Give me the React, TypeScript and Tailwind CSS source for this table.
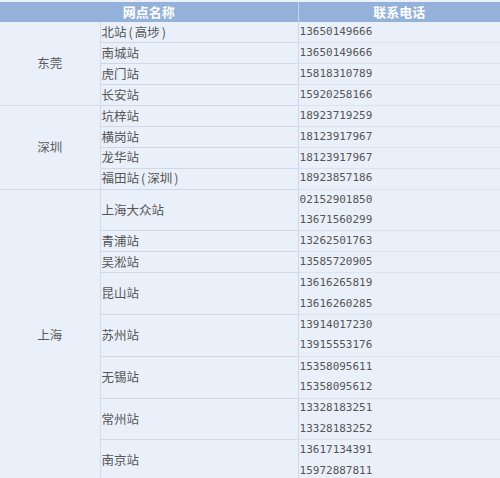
import React from "react";

type Station = { name: React.ReactNode; phones: string[] };
type Group = { city: string; stations: Station[] };

const P = ({ children }: { children: React.ReactNode }) => (
  <span className="mx-[2px]">{children}</span>
);

const groups: Group[] = [
  {
    city: "东莞",
    stations: [
      { name: <>北站<P>(</P>高埗<P>)</P></>, phones: ["13650149666"] },
      { name: "南城站", phones: ["13650149666"] },
      { name: "虎门站", phones: ["15818310789"] },
      { name: "长安站", phones: ["15920258166"] },
    ],
  },
  {
    city: "深圳",
    stations: [
      { name: "坑梓站", phones: ["18923719259"] },
      { name: "横岗站", phones: ["18123917967"] },
      { name: "龙华站", phones: ["18123917967"] },
      { name: <>福田站<P>(</P>深圳<P>)</P></>, phones: ["18923857186"] },
    ],
  },
  {
    city: "上海",
    stations: [
      { name: "上海大众站", phones: ["02152901850", "13671560299"] },
      { name: "青浦站", phones: ["13262501763"] },
      { name: "吴淞站", phones: ["13585720905"] },
      { name: "昆山站", phones: ["13616265819", "13616260285"] },
      { name: "苏州站", phones: ["13914017230", "13915553176"] },
      { name: "无锡站", phones: ["15358095611", "15358095612"] },
      { name: "常州站", phones: ["13328183251", "13328183252"] },
      { name: "南京站", phones: ["13617134391", "15972887811"] },
    ],
  },
];

export default function App() {
  const rows: React.ReactNode[] = [];
  groups.forEach((g, gi) => {
    const total = g.stations.reduce((a, s) => a + s.phones.length, 0);
    g.stations.forEach((s, si) => {
      s.phones.forEach((ph, pi) => {
        const lastOfStation = pi === s.phones.length - 1;
        rows.push(
          <tr key={`${gi}-${si}-${pi}`} className="h-[20.9px]">
            {si === 0 && pi === 0 && (
              <td
                rowSpan={total}
                className="border-b border-r border-[#d3dce9] p-0 text-center align-middle text-[12.5px] text-[#5a5a5a]"
              >
                {g.city}
              </td>
            )}
            {pi === 0 && (
              <td
                rowSpan={s.phones.length}
                className="border-b border-r border-[#cfd8e6] p-0 pl-[1px] align-middle text-[12.5px] text-[#555]"
              >
                {s.name}
              </td>
            )}
            <td
              className={`p-0 pl-[1px] align-middle text-[11px] text-[#555] ${
                lastOfStation ? "border-b border-[#dde4ee]" : ""
              }`}
              style={{ fontFamily: '"DejaVu Sans Mono", monospace' }}
            >
              {ph}
            </td>
          </tr>
        );
      });
    });
  });

  return (
    <div
      className="h-[478px] w-[500px] overflow-hidden bg-[#edf2fa] pt-[2px]"
      style={{ fontFamily: '"Noto Sans CJK SC", "Noto Sans", sans-serif' }}
    >
      <table className="w-[500px] table-fixed border-collapse bg-[#eaf0f9]">
        <colgroup>
          <col className="w-[100px]" />
          <col className="w-[198px]" />
          <col className="w-[202px]" />
        </colgroup>
        <thead>
          <tr className="h-[20px] bg-[#94b2d9]">
            <th
              colSpan={2}
              className="border-r border-[#c3d3ea] p-0 text-center text-[13px] font-semibold text-white"
            >
              网点名称
            </th>
            <th className="p-0 text-center text-[13px] font-semibold text-white">
              联系电话
            </th>
          </tr>
        </thead>
        <tbody>{rows}</tbody>
      </table>
    </div>
  );
}
